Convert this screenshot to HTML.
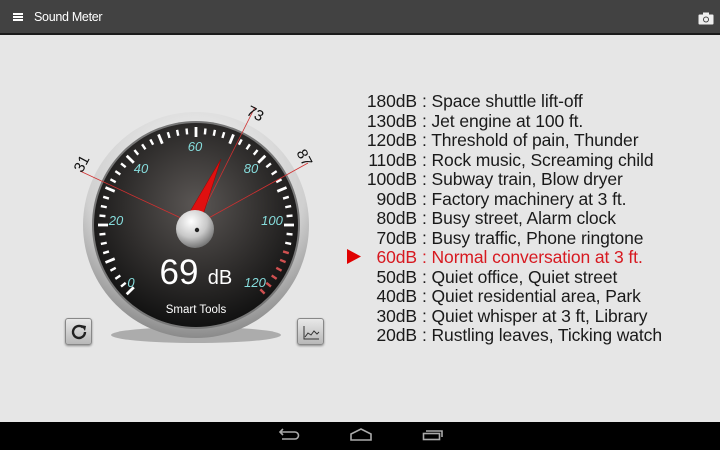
<!DOCTYPE html>
<html><head><meta charset="utf-8"><style>
*{margin:0;padding:0;box-sizing:border-box}
body{width:720px;height:450px;overflow:hidden;background:#e6e6e6;font-family:"Liberation Sans",sans-serif;position:relative}
.top{position:absolute;left:0;top:0;width:720px;height:35px;background:#424242;border-bottom:2px solid #1a1a1a}
.top .t{position:absolute;left:34px;top:10px;color:#fff;font-size:12.5px;letter-spacing:-0.3px}
.nav{position:absolute;left:0;top:422px;width:720px;height:28px;background:#000}
.list{position:absolute;left:0;top:91px;font-size:17.5px;color:#1a1a1a;letter-spacing:-0.1px}
.row{position:absolute;left:0;width:720px;height:20px;white-space:nowrap;line-height:20px}
.row .a{position:absolute;left:337px;width:80px;text-align:right}
.row .b{position:absolute;left:422px}
.red{color:#d71920}
.btn{position:absolute;width:27px;height:27px;border-radius:3px;background:linear-gradient(#e8e8e8,#b8b8b8);border:1px solid #888;box-shadow:0 1px 2px rgba(0,0,0,.4)}
</style></head><body>
<div class="top">
<div style="position:absolute;left:13px;top:13px;width:10px;height:2px;background:#fff;box-shadow:0 3px 0 #fff,0 6px 0 #fff"></div>
<div class="t">Sound Meter</div>
<svg style="position:absolute;left:698px;top:12px" width="16" height="13" viewBox="0 0 16 13"><rect x="0.5" y="2.5" width="15" height="10" rx="1" fill="#eee"/><rect x="5" y="0.5" width="6" height="3" fill="#eee"/><circle cx="8" cy="7.5" r="3" fill="#444"/><circle cx="8" cy="7.5" r="2" fill="#eee"/></svg>
</div>

<svg style="position:absolute;left:0;top:0" width="360" height="420">
<defs>
<radialGradient id="bz" cx="50%" cy="30%" r="70%"><stop offset="0" stop-color="#fafafa"/><stop offset="0.7" stop-color="#cfcfcf"/><stop offset="1" stop-color="#8a8a8a"/></radialGradient>
<radialGradient id="fc" cx="50%" cy="40%" r="60%"><stop offset="0" stop-color="#5a5654"/><stop offset="0.6" stop-color="#2e2c2b"/><stop offset="1" stop-color="#111"/></radialGradient>
<radialGradient id="hb" cx="40%" cy="30%" r="70%"><stop offset="0" stop-color="#fff"/><stop offset="0.6" stop-color="#c8c8c8"/><stop offset="1" stop-color="#777"/></radialGradient>
<line id="t" x1="0" y1="-97" x2="0" y2="-91" stroke="#fff" stroke-width="2.4"/>
<line id="T" x1="0" y1="-98" x2="0" y2="-88" stroke="#fff" stroke-width="2.8"/>
<line id="r" x1="0" y1="-97" x2="0" y2="-91" stroke="#d05050" stroke-width="2.4"/>
</defs>
<ellipse cx="196" cy="335" rx="85" ry="8" fill="rgba(0,0,0,.25)"/>
<circle cx="196" cy="225" r="113" fill="url(#bz)"/>
<circle cx="196" cy="225" r="104" fill="#777"/>
<circle cx="196" cy="225" r="102" fill="url(#fc)"/>
<g transform="translate(196,225)">
<use href="#T" transform="rotate(-135)"/><use href="#t" transform="rotate(-129.4)"/><use href="#t" transform="rotate(-123.75)"/><use href="#t" transform="rotate(-118.1)"/>
<use href="#T" transform="rotate(-112.5)"/><use href="#t" transform="rotate(-106.9)"/><use href="#t" transform="rotate(-101.25)"/><use href="#t" transform="rotate(-95.6)"/>
<use href="#T" transform="rotate(-90)"/><use href="#t" transform="rotate(-84.4)"/><use href="#t" transform="rotate(-78.75)"/><use href="#t" transform="rotate(-73.1)"/>
<use href="#T" transform="rotate(-67.5)"/><use href="#t" transform="rotate(-61.9)"/><use href="#t" transform="rotate(-56.25)"/><use href="#t" transform="rotate(-50.6)"/>
<use href="#T" transform="rotate(-45)"/><use href="#t" transform="rotate(-39.4)"/><use href="#t" transform="rotate(-33.75)"/><use href="#t" transform="rotate(-28.1)"/>
<use href="#T" transform="rotate(-22.5)"/><use href="#t" transform="rotate(-16.9)"/><use href="#t" transform="rotate(-11.25)"/><use href="#t" transform="rotate(-5.6)"/>
<use href="#T" transform="rotate(0)"/><use href="#t" transform="rotate(5.6)"/><use href="#t" transform="rotate(11.25)"/><use href="#t" transform="rotate(16.9)"/>
<use href="#T" transform="rotate(22.5)"/><use href="#t" transform="rotate(28.1)"/><use href="#t" transform="rotate(33.75)"/><use href="#t" transform="rotate(39.4)"/>
<use href="#T" transform="rotate(45)"/><use href="#t" transform="rotate(50.6)"/><use href="#t" transform="rotate(56.25)"/><use href="#t" transform="rotate(61.9)"/>
<use href="#T" transform="rotate(67.5)"/><use href="#t" transform="rotate(73.1)"/><use href="#t" transform="rotate(78.75)"/><use href="#t" transform="rotate(84.4)"/>
<use href="#T" transform="rotate(90)"/><use href="#t" transform="rotate(95.6)"/><use href="#t" transform="rotate(101.25)"/><use href="#r" transform="rotate(106.9)"/>
<use href="#r" transform="rotate(112.5)"/><use href="#r" transform="rotate(118.1)"/><use href="#r" transform="rotate(123.75)"/><use href="#r" transform="rotate(129.4)"/>
<use href="#r" transform="rotate(135)"/>
<line x1="0" y1="0" x2="-116" y2="-54" stroke="#d03030" stroke-width="0.8"/>
<line x1="0" y1="0" x2="59" y2="-118" stroke="#d03030" stroke-width="0.8"/>
<line x1="0" y1="0" x2="112" y2="-62" stroke="#d03030" stroke-width="0.8"/>
</g>
<g font-family="Liberation Sans" font-style="italic" font-size="13" fill="#86dcdc" text-anchor="middle">
<text x="131" y="287">0</text><text x="116" y="225">20</text><text x="141" y="173">40</text><text x="195" y="151">60</text><text x="251" y="173">80</text><text x="272" y="225">100</text><text x="255" y="287">120</text>
</g>
<g font-family="Liberation Sans" font-size="15" fill="#111" text-anchor="middle">
<text transform="translate(86,166) rotate(-62)">31</text>
<text transform="translate(253,118) rotate(27)">73</text>
<text transform="translate(300,160) rotate(62)">87</text>
</g>
<polygon points="188,215 202,218 221,159" fill="#e01010" stroke="#900" stroke-width="0.5"/>
<circle cx="195" cy="229" r="19" fill="url(#hb)"/>
<circle cx="197" cy="230" r="2.2" fill="#222"/>
<text x="179" y="284" font-family="Liberation Sans" font-size="35" fill="#fff" text-anchor="middle">69</text>
<text x="220" y="284" font-family="Liberation Sans" font-size="20" fill="#fff" text-anchor="middle">dB</text>
<text x="196" y="313" font-family="Liberation Sans" font-size="11.5" fill="#fff" text-anchor="middle">Smart Tools</text>
</svg>

<div class="btn" style="left:65px;top:318px"><svg width="27" height="27" viewBox="0 0 27 27"><path d="M19 13a6 6 0 1 1-2-4.5" fill="none" stroke="#222" stroke-width="2.4"/><polygon points="15,6 20,7 19,12" fill="#222"/></svg></div>
<div class="btn" style="left:297px;top:318px"><svg width="27" height="27" viewBox="0 0 27 27"><path d="M6 7v13h15" fill="none" stroke="#333" stroke-width="1"/><path d="M7 18l3-4 3 2 3-4 3 3 2-2" fill="none" stroke="#333" stroke-width="1"/></svg></div>

<div class="list">
<div class="row" style="top:0"><span class="a">180dB</span><span class="b">: Space shuttle lift-off</span></div>
<div class="row" style="top:19.5px"><span class="a">130dB</span><span class="b">: Jet engine at 100 ft.</span></div>
<div class="row" style="top:39px"><span class="a">120dB</span><span class="b">: Threshold of pain, Thunder</span></div>
<div class="row" style="top:58.5px"><span class="a">110dB</span><span class="b">: Rock music, Screaming child</span></div>
<div class="row" style="top:78px"><span class="a">100dB</span><span class="b">: Subway train, Blow dryer</span></div>
<div class="row" style="top:97.5px"><span class="a">90dB</span><span class="b">: Factory machinery at 3 ft.</span></div>
<div class="row" style="top:117px"><span class="a">80dB</span><span class="b">: Busy street, Alarm clock</span></div>
<div class="row" style="top:136.5px"><span class="a">70dB</span><span class="b">: Busy traffic, Phone ringtone</span></div>
<div class="row red" style="top:156px"><span class="a">60dB</span><span class="b">: Normal conversation at 3 ft.</span></div>
<div class="row" style="top:175.5px"><span class="a">50dB</span><span class="b">: Quiet office, Quiet street</span></div>
<div class="row" style="top:195px"><span class="a">40dB</span><span class="b">: Quiet residential area, Park</span></div>
<div class="row" style="top:214.5px"><span class="a">30dB</span><span class="b">: Quiet whisper at 3 ft, Library</span></div>
<div class="row" style="top:234px"><span class="a">20dB</span><span class="b">: Rustling leaves, Ticking watch</span></div>
</div>
<svg style="position:absolute;left:347px;top:249px" width="14" height="15"><polygon points="0,0 14,7.5 0,15" fill="#e00000"/></svg>

<div class="nav">
<svg style="position:absolute;left:278px;top:6px" width="22" height="14"><path d="M2 4h15a3 3 0 0 1 0 7H4" fill="none" stroke="#aaa" stroke-width="1.6"/><path d="M5 1L2 4l3 3" fill="none" stroke="#aaa" stroke-width="1.6"/></svg>
<svg style="position:absolute;left:349px;top:5px" width="24" height="14"><path d="M2 13V7l10-5 10 5v6z" fill="none" stroke="#aaa" stroke-width="1.6"/></svg>
<svg style="position:absolute;left:422px;top:5px" width="22" height="14"><rect x="1.5" y="6.5" width="16" height="6" fill="none" stroke="#aaa" stroke-width="1.6"/><path d="M4 4h16v6" fill="none" stroke="#aaa" stroke-width="1.6"/></svg>
</div>
</body></html>
